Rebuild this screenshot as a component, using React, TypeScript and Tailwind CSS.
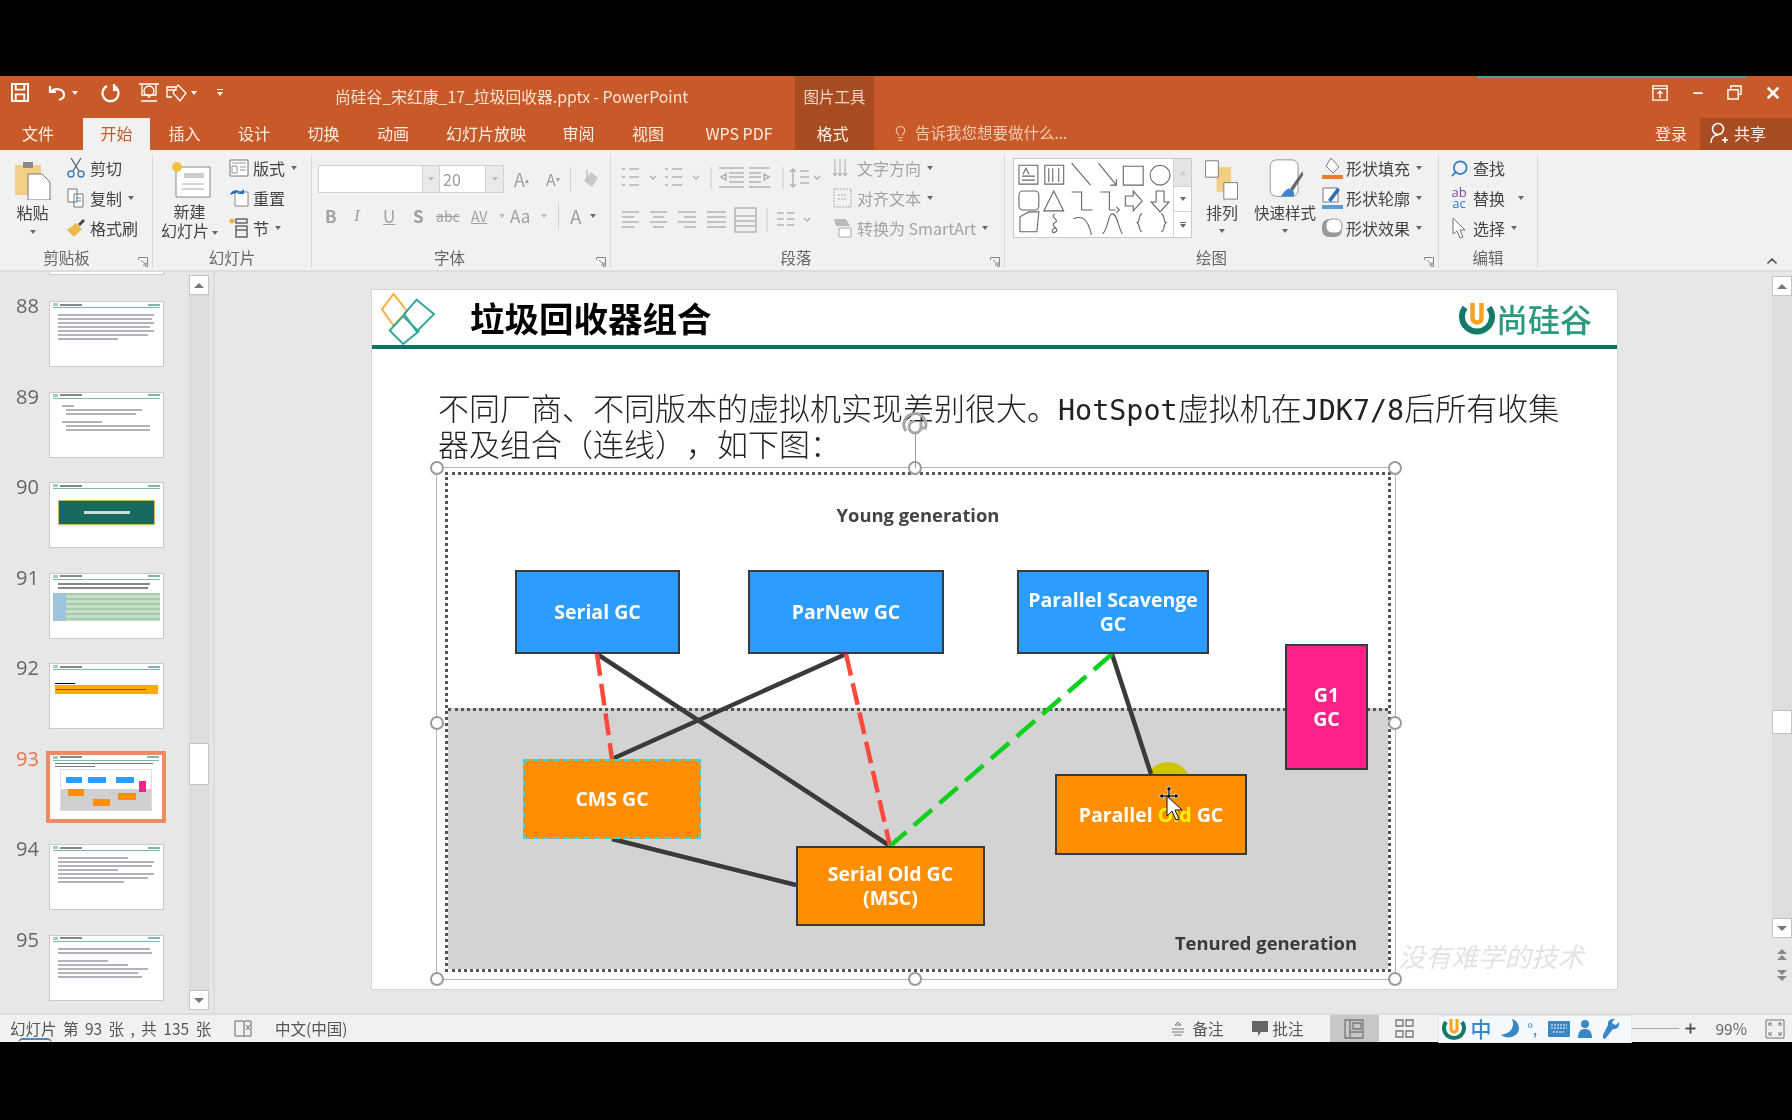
import { ChevronUp, Lightbulb, Minus, Plus, Search, X } from "lucide-react";

const cjk = "font-['Microsoft_YaHei','Noto_Sans_CJK_SC','Noto_Sans',sans-serif]";

const tabs = [
  { label: "文件", w: "w-[83px] pr-[7px]" },
  { label: "开始", w: "w-[67px]", active: true },
  { label: "插入", w: "w-[69px]" },
  { label: "设计", w: "w-[70px]" },
  { label: "切换", w: "w-[69px]" },
  { label: "动画", w: "w-[70px]" },
  { label: "幻灯片放映", w: "w-[116px]" },
  { label: "审阅", w: "w-[69px]" },
  { label: "视图", w: "w-[70px]" },
  { label: "WPS PDF", w: "w-[112px]" },
];

const Caret = ({ className = "" }: { className?: string }) => (
  <span className={`inline-block w-0 h-0 border-x-[3px] border-x-transparent border-t-[4px] border-t-[#666] ${className}`} />
);

function GroupLabel({ text, launcher, className = "" }: { text: string; launcher?: boolean; className?: string }) {
  return (
    <div className={`relative h-[20px] flex items-center justify-center text-[15.5px] text-[#666] ${className}`}>
      {text}
      {launcher && (
        <svg className="absolute right-[4px] bottom-[1px]" width="10" height="10" viewBox="0 0 10 10" fill="none" stroke="#888">
          <path d="M.5 3V.5H9.500V9.500H7M3 3l5 5M8 5v3H5" />
        </svg>
      )}
    </div>
  );
}

function SmallBtn({ icon, text, caret, muted }: { icon: React.ReactNode; text: string; caret?: boolean; muted?: boolean }) {
  return (
    <div className={`h-[30px] flex items-center gap-[3px] text-[16px] whitespace-nowrap ${muted ? "text-[#a3a3a3]" : "text-[#444]"}`}>
      <span className="w-[22px] h-[22px] flex items-center justify-center shrink-0">{icon}</span>
      {text}
      {caret && <Caret className="ml-[3px]" />}
    </div>
  );
}

function Thumb({ num, selected, children }: { num: number; selected?: boolean; children: React.ReactNode }) {
  return (
    <div className="h-[90.5px] flex">
      <div className={`w-[46px] pl-[16px] -mt-[6px] text-[20px] leading-[22px] ${selected ? "text-[#e8744a]" : "text-[#666]"} font-['Open_Sans',sans-serif]`}>{num}</div>
      <div className={selected ? "w-[120px] h-[72px] -mt-[3px] border-[4px] border-[#ef8a62] bg-white" : "ml-[3px] w-[115px] h-[66px] border border-[#c9cac9] bg-white"}>
        <div className="h-[6px] mx-[3px] border-b border-[#7fb8ae] flex items-center gap-[2px]">
          <span className="w-[5px] h-[3px] bg-[#9fd0c8]" />
          <span className="w-[22px] h-[2px] bg-[#888]" />
          <span className="ml-auto w-[12px] h-[2px] bg-[#7fb8ae]" />
        </div>
        {children}
      </div>
    </div>
  );
}

const TextBars = ({ bars }: { bars: string[] }) => (
  <div className="pt-[6px] px-[8px] flex flex-col gap-[2px]">
    {bars.map((b, i) => (
      <div key={i} className={`h-[2px] bg-[#b0b3bd] ${b}`} />
    ))}
  </div>
);

function Shape({ text, className, children }: { text?: string; className: string; children?: React.ReactNode }) {
  return (
    <div className={`absolute flex items-center justify-center text-center border-2 border-[#3a3a3a] text-white font-bold text-[19.5px] leading-[24px] font-['Open_Sans',sans-serif] ${className}`}>
      {children ?? text}
    </div>
  );
}

const handles = [
  "left-0 top-0", "left-[478px] top-0", "left-[958px] top-0",
  "left-0 top-[255px]", "left-[958px] top-[255px]",
  "left-0 top-[511px]", "left-[478px] top-[511px]", "left-[958px] top-[511px]",
];

const ULogo = ({ size }: { size: number }) => (
  <svg width={size} height={size} viewBox="0 0 24 24" fill="none">
    <path d="M4 5a10 10 0 1 0 16 0" stroke="#137a68" strokeWidth="4" />
    <path d="M9 2v10a3 3 0 0 0 6 0V2" stroke="#f3a51c" strokeWidth="3" />
  </svg>
);

export default function App() {
  return (
    <div className={`w-[1792px] h-[1120px] bg-black overflow-hidden blur-[0.4px] ${cjk}`}>
      <div className="h-[76px]" />

      {/* title bar */}
      <div className="relative h-[42px] bg-[#c75a28] flex items-center text-white">
        <div className="absolute right-[46px] top-0 w-[269px] h-[2px] bg-[#3fa89a]" />
        <div className="w-[335px] -mt-[9px] flex items-center pl-[11px] text-white">
          <svg width="18" height="19" viewBox="0 0 19 20" fill="none" stroke="white" strokeWidth="2">
            <path d="M1 1h17v18H1zM5 1v6h9V1M5 19v-7h9v7" />
          </svg>
          <svg className="ml-[19px]" width="20" height="18" viewBox="0 0 20 18" fill="none" stroke="white" strokeWidth="2.200">
            <path d="M2 2v6h6M3 8c3-4 12-4 13 2 .5 3-2 5-5 6" />
          </svg>
          <Caret className="ml-[4px] !border-t-white" />
          <svg className="ml-[23px]" width="19" height="20" viewBox="0 0 19 20" fill="none" stroke="white" strokeWidth="2.200">
            <path d="M6 3a8 8 0 1 0 7 0M13 1v6h5" />
          </svg>
          <svg className="ml-[17px]" width="24" height="24" viewBox="0 0 24 24" fill="none" stroke="white" strokeWidth="1.300">
            <path d="M2 3h20M5 3v11h14V3M4 20h16M12 14v3" />
            <circle cx="12" cy="10" r="5" />
          </svg>
          <svg className="ml-[4px]" width="24" height="22" viewBox="0 0 24 22" fill="none" stroke="white" strokeWidth="1.300">
            <path d="M2 5h9v3h-9zM13 3l8 8-6 8-7-8zM2 5v10h5" />
          </svg>
          <Caret className="ml-[2px] !border-t-white" />
          <span className="ml-[20px] flex flex-col items-center gap-[2px]">
            <span className="w-[6px] h-px bg-white" />
            <Caret className="!border-t-white" />
          </span>
        </div>
        <div className="w-[460px] -mt-[1px] text-[15.8px] text-[#f6e3d8] whitespace-nowrap">尚硅谷_宋红康_17_垃圾回收器.pptx - PowerPoint</div>
        <div className="w-[79px] h-full bg-[#a84d22] flex items-center justify-center text-[15.500px] text-[#efd3c3]">图片工具</div>
        <div className="ml-auto -mt-[9px] flex items-center pr-[10px]">
          <svg width="16" height="16" viewBox="0 0 18 18" fill="none" stroke="white" strokeWidth="1.500">
            <path d="M1 1h16v16H1zM1 4h16M9 15V7M6 10l3-3 3 3" />
          </svg>
          <Minus className="ml-[23px]" size={14} strokeWidth={3} />
          <svg className="ml-[22px]" width="15" height="15" viewBox="0 0 16 16" fill="none" stroke="white" strokeWidth="1.500">
            <path d="M4 4V1h11v9h-3M1 5h11v10H1z" />
          </svg>
          <X className="ml-[22px]" size={18} strokeWidth={3.5} />
        </div>
      </div>

      {/* tabs */}
      <div className="h-[32px] bg-[#c75a28] flex items-stretch text-[16px] text-[#fbeee6]">
        {tabs.map((t) => (
          <div key={t.label} className={`${t.w} flex items-center justify-center pb-[2px] ${t.active ? "bg-[#f1f1f0] text-[#c75a28]" : ""}`}>
            {t.label}
          </div>
        ))}
        <div className="w-[79px] bg-[#a84d22] flex items-center justify-center pb-[2px] pr-[4px]">格式</div>
        <div className="ml-[18px] pb-[2px] flex items-center gap-[6px] text-[#f0c9b3] text-[15.5px]">
          <Lightbulb size={17} strokeWidth={1.500} />
          告诉我您想要做什么...
        </div>
        <div className="ml-auto flex items-center">
          <span className="mr-[13px] pb-[2px]">登录</span>
          <div className="w-[92px] h-full bg-[#a84d22] flex items-center pl-[9px] gap-[5px] pb-[2px]">
            <svg width="20" height="22" viewBox="0 0 20 22" fill="none" stroke="white" strokeWidth="1.600">
              <circle cx="9" cy="7" r="5.500" />
              <path d="M2 21c0-5 3-8 7-8M13 18h6M16 15v6" />
            </svg>
            共享
          </div>
        </div>
      </div>

      {/* ribbon */}
      <div className="relative h-[122px] bg-[#f0f1f0] flex border-b-2 border-[#dcdddc]">
        {/* clipboard */}
        <div className="w-[153px] border-r border-[#d8d9d8] flex flex-col mt-[4px] mb-[2px]">
          <div className="flex-1 flex">
            <div className="w-[65px] flex flex-col items-center pt-[4px]">
              <svg width="38" height="42" viewBox="0 0 38 42">
                <path d="M1 7h26v30H1z" fill="#f2cf85" />
                <path d="M9 4h10v6H9z" fill="#8a8a8a" />
                <path d="M14 16h14l8 8v18H14z" fill="#fff" stroke="#777" />
              </svg>
              <span className="text-[16px] leading-[20px] mt-[2px] text-[#444]">粘贴</span>
              <Caret className="mt-[8px]" />
            </div>
            <div className="-mt-[1px]">
              <SmallBtn text="剪切" icon={<svg width="20" height="22" viewBox="0 0 20 22" fill="none" stroke="#5b6b7b" strokeWidth="1.400"><path d="M5 1l8 13M15 1L7 14" /><circle cx="5" cy="17" r="3" stroke="#3d7cc0" /><circle cx="15" cy="17" r="3" stroke="#3d7cc0" /></svg>} />
              <SmallBtn text="复制" caret icon={<svg width="18" height="20" viewBox="0 0 18 20" fill="#fff" stroke="#777"><path d="M1 1h9v13H1zM7 6h9v13H7z" /><path d="M9 10h5M9 13h5" stroke="#4a8ac8" /></svg>} />
              <SmallBtn text="格式刷" icon={<svg width="20" height="20" viewBox="0 0 20 20"><path d="M1 12l9-7 6 6-8 8z" fill="#eeb84f" /><path d="M12 6l5-5 2 2-5 5z" fill="#444" /></svg>} />
            </div>
          </div>
          <GroupLabel text="剪贴板" launcher className="pr-[19px]" />
        </div>

        {/* slides */}
        <div className="w-[159px] border-r border-[#d8d9d8] flex flex-col mt-[4px] mb-[2px]">
          <div className="flex-1 flex">
            <div className="w-[75px] flex flex-col items-center pt-[4px] pr-[2px]">
              <svg width="44" height="42" viewBox="0 0 44 42">
                <path d="M8 9h34v30H8z" fill="#fff" stroke="#888" />
                <path d="M16 15h20v5H16z" fill="#ccc" />
                <path d="M14 26h22M14 31h22" stroke="#aaa" />
                <circle cx="9" cy="9" r="5" fill="#f2c23f" />
              </svg>
              <span className="text-[16px] leading-[19px] mt-[2px] text-[#444]">新建</span>
              <span className="text-[16px] leading-[19px] text-[#444] whitespace-nowrap">幻灯片<Caret className="ml-[3px] mb-[2px]" /></span>
            </div>
            <div className="-mt-[1px]">
              <SmallBtn text="版式" caret icon={<svg width="20" height="20" viewBox="0 0 20 20" fill="#fff" stroke="#777"><path d="M1 2h18v16H1z" /><path d="M3 5h14M3 8h5v7H3zM11 9h6M11 12h6" stroke="#999" /></svg>} />
              <SmallBtn text="重置" icon={<svg width="20" height="20" viewBox="0 0 20 20" fill="none"><path d="M6 4h13v14H6z" fill="#fff" stroke="#888" /><path d="M1 7c1-5 7-6 10-3l-3 2h7V1l-2 2" fill="#2c6fb3" /></svg>} />
              <SmallBtn text="节" caret icon={<svg width="20" height="22" viewBox="0 0 20 22" fill="none"><path d="M7 2h11v4H7zM7 9h11v11H7zM7 13h11" stroke="#666" strokeWidth="1.500" /><circle cx="3" cy="4" r="2.500" fill="#f2b13f" /></svg>} />
            </div>
          </div>
          <GroupLabel text="幻灯片" />
        </div>

        {/* font */}
        <div className="w-[299px] border-r border-[#d8d9d8] flex flex-col mt-[4px] mb-[2px] text-[#a0a0a0]">
          <div className="flex-1 pl-[6px] pt-[11px]">
            <div className="flex items-center">
              <div className="w-[105px] h-[28px] bg-white border border-[#d2d3d2]" />
              <div className="w-[16px] h-[28px] bg-[#e8e9e8] border-y border-[#d2d3d2] flex items-center justify-center"><Caret className="!border-t-[#bbb]" /></div>
              <div className="w-[47px] h-[28px] bg-white border border-[#d2d3d2] pl-[3px] leading-[26px] text-[16px] text-[#999]">20</div>
              <div className="w-[18px] h-[28px] bg-[#e8e9e8] border-y border-r border-[#d2d3d2] flex items-center justify-center"><Caret className="!border-t-[#bbb]" /></div>
              <span className="ml-[10px] w-[24px] text-[18px]">A<sup className="text-[8px]">▴</sup></span>
              <span className="ml-[8px] w-[22px] text-[16px]">A<sup className="text-[8px]">▾</sup></span>
              <span className="ml-[2px] h-[24px] border-l border-[#d0d0d0]" />
              <svg className="ml-[10px]" width="20" height="20" viewBox="0 0 20 20"><path d="M3 12L10 3l7 6-6 9z" fill="#c9c9c9" /><path d="M6 1v10" stroke="#aaa" /></svg>
            </div>
            <div className="mt-[10px] flex items-center text-[17px] leading-[24px]">
              <span className="ml-[7px] w-[29px] font-bold">B</span>
              <span className="w-[29px] italic font-['Liberation_Serif',serif]">I</span>
              <span className="w-[30px] underline">U</span>
              <span className="w-[23px] font-bold">S</span>
              <span className="w-[35px] text-[14px] line-through">abc</span>
              <span className="w-[28px] text-[14px] underline">AV</span>
              <Caret className="mr-[5px] !border-t-[#bbb]" />
              <span className="w-[31px]">Aa</span>
              <Caret className="!border-t-[#bbb]" />
              <span className="ml-[11px] h-[26px] border-l border-[#d0d0d0]" />
              <span className="ml-[11px] w-[20px] text-[19px]">A</span>
              <Caret className="!border-t-[#666]" />
            </div>
          </div>
          <GroupLabel text="字体" launcher className="pr-[23px]" />
        </div>

        {/* paragraph */}
        <div className="w-[394px] border-r border-[#d8d9d8] flex flex-col mt-[4px] mb-[2px]">
          <div className="flex-1 flex">
            <div className="w-[221px] pl-[10px] pt-[12px]">
              <svg width="205" height="68" viewBox="0 0 205 68" fill="none" stroke="#b4b4b4" strokeWidth="1.500">
                <path d="M1 3h3M1 11h3M1 19h3M8 3h10M8 11h10M8 19h10M44 3h3M44 11h3M44 19h3M51 3h10M51 11h10M51 19h10" />
                <path d="M29 10l3 3 3-3M72 10l3 3 3-3" />
                <path d="M90 1v22" stroke="#d6d6d6" />
                <path d="M98 2h25M98 21h25M108 7h15M108 11h15M108 16h15M100 11l5-3v6zM128 2h21M128 21h21M128 7h12M128 11h12M128 16h12M148 11l-5-3v6z" />
                <path d="M162 1v22" stroke="#d6d6d6" />
                <path d="M172 3v18M169 6l3-3 3 3M169 18l3 3 3-3M179 5h9M179 11h9M179 17h9M193 10l3 3 3-3" />
                <path d="M1 46h17M1 51h12M1 56h17M1 61h12M29 46h17M32 51h11M29 56h17M32 61h11M57 46h18M63 51h12M57 56h18M63 61h12M86 46h19M86 51h19M86 56h19M86 61h19" />
                <path d="M114 42h21v24h-21zM114 50h21M114 55h21M114 60h21" />
                <path d="M146 42v24" stroke="#d6d6d6" />
                <path d="M156 47h7M166 47h7M156 53h7M166 53h7M156 59h7M166 59h7M183 52l3 3 3-3" />
              </svg>
            </div>
            <div className="text-[#a6a6a6] -mt-[1px]">
              <SmallBtn muted text="文字方向" caret icon={<svg width="20" height="22" viewBox="0 0 20 22" fill="none" stroke="#aaa"><path d="M2 2v16M7 2v16M12 2v16M0 16l2 3 2-3M5 16l2 3 2-3M10 16l2 3 2-3" /></svg>} />
              <SmallBtn muted text="对齐文本" caret icon={<svg width="20" height="22" viewBox="0 0 20 22" fill="none" stroke="#aaa" strokeDasharray="2 1"><path d="M1 2h17v18H1zM5 8h9M5 12h9" /></svg>} />
              <SmallBtn muted text="转换为 SmartArt" caret icon={<svg width="20" height="22" viewBox="0 0 20 22"><path d="M1 2h12l4 7H3z" fill="#b9b9b9" /><path d="M6 11h12v9H6z" fill="#fff" stroke="#aaa" /></svg>} />
            </div>
          </div>
          <GroupLabel text="段落" launcher className="pr-[23px]" />
        </div>

        {/* drawing */}
        <div className="w-[434px] border-r border-[#d8d9d8] flex flex-col mt-[4px] mb-[2px]">
          <div className="flex-1 flex">
            <div className="ml-[8px] mt-[4px] h-[80px] w-[179px] flex border border-[#c9cac9] bg-white">
              <svg className="flex-1" width="160" height="78" viewBox="0 0 160 78" fill="none" stroke="#666" strokeWidth="1.100">
                <path d="M5 6h19v19H5zM8 17h13M8 21h13M9 15l3-6 3 6" />
                <path d="M31 6h19v19H31zM35 9v14M39 9v14M45 9v14" />
                <path d="M58 4l19 22M85 4l18 22M103 20v6h-6" />
                <path d="M110 7h20v19h-20z" />
                <circle cx="147" cy="16" r="10" />
                <rect x="5" y="32" width="20" height="19" rx="4" />
                <path d="M40 32l10 20H30zM58 33h10v18h11M87 33h9v18h6M103 48l3 3-3 3M112 37h8v-5l9 10-9 10v-5h-8zM143 32h8v11h5l-9 10-9-10h5z" />
                <path d="M6 73V58l9-5h10l-2 20zM41 55c-6 3 6 6 0 9s6 6 1 9-4-3 0-4M60 60c9-4 14 0 18 16M89 75c6-4 5-20 10-20s6 14 10 20M129 55c-4 0-2 8-5 9 3 1 1 9 5 9M148 55c4 0 2 8 5 9-3 1-1 9-5 9" />
              </svg>
              <div className="w-[18px] flex flex-col border-l border-[#d2d3d2]">
                <div className="h-[27px] bg-[#e3e4e3] flex items-center justify-center"><Caret className="rotate-180 !border-t-[#ccc]" /></div>
                <div className="h-[26px] border-y border-[#d2d3d2] flex items-center justify-center"><Caret /></div>
                <div className="flex-1 flex flex-col items-center justify-center gap-[1px]"><span className="w-[6px] h-px bg-[#666]" /><Caret /></div>
              </div>
            </div>
            <div className="ml-[8px] w-[44px] flex flex-col items-center pt-[4px]">
              <svg width="36" height="42" viewBox="0 0 38 46">
                <path d="M13 10h16v27H13z" fill="#f2cf85" />
                <path d="M1 3h14v18H1zM21 27h15v18H21z" fill="#fff" stroke="#777" />
              </svg>
              <span className="text-[16px] leading-[20px] mt-[2px] text-[#444]">排列</span>
              <Caret className="mt-[7px]" />
            </div>
            <div className="ml-[9px] w-[64px] flex flex-col items-center pt-[5px]">
              <svg width="40" height="40" viewBox="0 0 44 46">
                <rect x="5" y="1" width="32" height="42" rx="7" fill="#fff" stroke="#888" />
                <path d="M42 14L28 34l3 3 12-19z" fill="#666" />
                <path d="M26 34c-4 2-6 5-9 9h15c2-3 0-8-6-9z" fill="#3d86cf" />
              </svg>
              <span className="text-[15.5px] leading-[20px] mt-[3px] text-[#444] whitespace-nowrap">快速样式</span>
              <Caret className="mt-[7px]" />
            </div>
            <div className="ml-[4px] -mt-[1px]">
              <SmallBtn text="形状填充" caret icon={<svg width="22" height="24" viewBox="0 0 22 24"><path d="M10 2l8 9-6 6-7-7z" fill="#fff" stroke="#777" /><path d="M1 19h21v4H1z" fill="#ed7d31" /></svg>} />
              <SmallBtn text="形状轮廓" caret icon={<svg width="22" height="24" viewBox="0 0 22 24"><path d="M2 2h15v14H2z" fill="#fff" stroke="#777" /><path d="M7 14l9-12 3 2-9 12z" fill="#2c6fb3" /><path d="M1 19h21v4H1z" fill="#5b9bd5" /></svg>} />
              <SmallBtn text="形状效果" caret icon={<svg width="22" height="22" viewBox="0 0 22 22"><rect x="1" y="2" width="20" height="18" rx="7" fill="#999" /><rect x="5" y="2" width="16" height="14" rx="6" fill="#fff" stroke="#999" /></svg>} />
            </div>
          </div>
          <GroupLabel text="绘图" launcher className="pr-[20px]" />
        </div>

        {/* editing */}
        <div className="w-[99px] border-r border-[#d8d9d8] flex flex-col mt-[4px] mb-[2px]">
          <div className="flex-1 pl-[9px] -mt-[1px]">
            <SmallBtn text="查找" icon={<Search size={19} className="text-[#2f7dc4] -scale-x-100" strokeWidth={2.200} />} />
            <div className="h-[30px] flex items-center gap-[3px] text-[16px] text-[#444]">
              <span className="w-[22px] text-[13px] leading-[11px] text-center font-['Open_Sans',sans-serif]"><span className="text-[#7d4aa8]">ab</span><br /><span className="text-[#2f7dc4]">ac</span></span>
              替换<Caret className="ml-[10px]" />
            </div>
            <SmallBtn text="选择" caret icon={<svg width="14" height="22" viewBox="0 0 14 22" fill="#fff" stroke="#777"><path d="M1 1v16l4-3 3 7 3-1-3-7h5z" /></svg>} />
          </div>
          <GroupLabel text="编辑" />
        </div>

        <ChevronUp className="absolute right-[12px] bottom-[1px] text-[#555]" size={16} strokeWidth={2.500} />
      </div>

      {/* main area */}
      <div className="h-[741px] bg-[#e6e7e6] flex">
        {/* thumbnail pane */}
        <div className="w-[215px] flex border-r-2 border-[#dcdddc]">
          <div className="w-[189px] pt-[29px] overflow-hidden">
            <div className="relative h-0"><div className="absolute left-[49px] -top-[35px] w-[115px] h-[9px] bg-white border border-[#c9cac9]" /></div>
            <Thumb num={88}><TextBars bars={["w-[96px]", "w-[94px]", "w-[96px]", "w-[92px]", "w-[96px]", "w-[90px]", "w-[60px]"]} /></Thumb>
            <Thumb num={89}><TextBars bars={["ml-[4px] w-[12px]", "ml-[8px] w-[76px]", "ml-[8px] w-[70px]", "w-[0px]", "ml-[4px] w-[40px]", "ml-[8px] w-[84px]", "ml-[8px] w-[84px]"]} /></Thumb>
            <Thumb num={90}>
              <div className="mx-[8px] mt-[11px] h-[25px] bg-[#17695e] border border-[#d9b65c] flex items-center justify-center shadow-sm">
                <span className="w-[46px] h-[3px] bg-[#c9dcd8]" />
              </div>
            </Thumb>
            <Thumb num={91}>
              <div className="px-[8px] pt-[3px] flex flex-col gap-[2px]">
                <div className="h-[2px] w-[92px] bg-[#888]" />
                <div className="h-[2px] w-[90px] bg-[#888]" />
              </div>
              <div className="mx-[3px] mt-[4px] h-[28px] bg-[#b3d2b7] flex">
                <div className="w-[13px] h-full bg-[#9dc3dd]" />
                <div className="flex-1 bg-[repeating-linear-gradient(180deg,#a7cbaa_0,#a7cbaa_2px,#c6dfc8_2px,#c6dfc8_5px)]" />
              </div>
            </Thumb>
            <Thumb num={92}>
              <div className="mx-[5px] mt-[13px] h-[1px] w-[20px] bg-black" />
              <div className="mx-[5px] mt-[1px] h-[9px] bg-[#ffab00] flex items-center px-[1px]">
                <span className="h-[1px] w-[90px] bg-[#7a5a00]" />
              </div>
            </Thumb>
            <Thumb num={93} selected>
              <div className="px-[5px] pt-[2px]">
                <div className="h-[1px] w-[98px] bg-[#777]" />
                <div className="h-[1px] mt-[2px] w-[40px] bg-[#777]" />
              </div>
              <div className="relative mx-[10px] mt-[2px] h-[42px] border border-[#ddd]">
                <div className="absolute left-0 right-0 bottom-0 h-[21px] bg-[#cfd0cf]" />
                <div className="absolute left-[5px] top-[7px] w-[16px] h-[6px] bg-[#2d9cff]" />
                <div className="absolute left-[27px] top-[7px] w-[18px] h-[6px] bg-[#2d9cff]" />
                <div className="absolute left-[55px] top-[7px] w-[18px] h-[6px] bg-[#2d9cff]" />
                <div className="absolute left-[78px] top-[11px] w-[7px] h-[11px] bg-[#ff2288]" />
                <div className="absolute left-[7px] top-[19px] w-[16px] h-[7px] bg-[#ff8f00]" />
                <div className="absolute left-[32px] top-[29px] w-[17px] h-[7px] bg-[#ff8f00]" />
                <div className="absolute left-[57px] top-[23px] w-[18px] h-[7px] bg-[#ff8f00]" />
              </div>
            </Thumb>
            <Thumb num={94}><TextBars bars={["w-[70px]", "w-[96px]", "w-[94px]", "w-[60px]", "w-[96px]", "w-[90px]", "w-[66px]"]} /></Thumb>
            <Thumb num={95}><TextBars bars={["w-[92px]", "w-[94px]", "w-[0px]", "w-[50px]", "w-[70px]", "w-[90px]", "w-[80px]", "w-[84px]"]} /></Thumb>
          </div>
          <div className="w-[20px] my-[3px] bg-[#dcdedc] flex flex-col">
            <div className="h-[20px] bg-white border border-[#c2c3c2] flex items-center justify-center"><Caret className="rotate-180 !border-t-[#777] !border-x-[5px] !border-t-[5px]" /></div>
            <div className="h-[448px]" />
            <div className="h-[42px] bg-white border border-[#c2c3c2]" />
            <div className="flex-1" />
            <div className="h-[20px] bg-white border border-[#c2c3c2] flex items-center justify-center"><Caret className="!border-t-[#777] !border-x-[5px] !border-t-[5px]" /></div>
          </div>
        </div>

        {/* editor */}
        <div className="flex-1 pl-[156px] pt-[17px]">
          <div className="relative w-[1247px] h-[701px] bg-white border border-[#d4d5d4]">
            <div className="relative h-[59px] flex items-center border-b-[4px] border-[#0f7465]">
              <svg className="ml-[7px] shrink-0" width="58" height="54" viewBox="0 0 58 56" fill="none" strokeWidth="2">
                <path d="M14 3L28 21 14 36 2 19z" stroke="#f3b23c" />
                <path d="M38 9L56 24 38 42 25 24z" stroke="#2fa79a" />
                <path d="M24 26L40 42 24 55 10 41z" stroke="#2fa79a" />
              </svg>
              <h1 className="ml-[33px] text-[34.5px] font-bold text-black leading-none">垃圾回收器组合</h1>
              <div className="ml-auto mr-[25px] flex items-center gap-[1px]">
                <ULogo size={36} />
                <span className="text-[32px] font-medium leading-none text-[#2a9a80]">尚硅谷</span>
              </div>
            </div>

            <div className="mt-[40px] ml-[66px] text-[31px] leading-[36px] text-[#222] font-light whitespace-nowrap [text-spacing-trim:space-all]">
              <p className="h-[36px]">
                不同厂商、不同版本的虚拟机实现差别很大。<span className="font-['DejaVu_Sans_Mono',monospace] text-[28.4px] leading-none font-normal">HotSpot</span>虚拟机在<span className="font-['DejaVu_Sans_Mono',monospace] text-[28.4px] leading-none font-normal">JDK7/8</span>后所有收集
              </p>
              <p className="h-[36px]">器及组合（连线），如下图：</p>
            </div>

            {/* selected picture */}
            <div className="relative mt-[6px] ml-[64px] w-[960px] h-[513px] border border-[#b5b6b5]">
              <div className="absolute left-[8px] top-[4px] w-[946px] h-[500px] border-[3px] border-dotted border-[#555]">
                <div className="absolute left-0 right-0 bottom-0 h-[261px] bg-[#d2d3d2] border-t-[3px] border-dotted border-[#555]" />
                <div className="absolute left-0 w-full top-[26px] text-center text-[18.4px] font-bold text-[#444] font-['Open_Sans',sans-serif]">Young generation</div>
                <div className="absolute right-[31px] bottom-[12px] text-[18.4px] font-bold text-[#3a3a3a] font-['Open_Sans',sans-serif]">Tenured generation</div>
              </div>
              <div className="absolute left-[708px] top-[294px] w-[46px] h-[46px] rounded-full bg-[#cfc400]" />

              <svg className="absolute left-0 top-0" width="958" height="511" viewBox="437 469 958 511" fill="none" strokeWidth="4.500">
                <path d="M597 655L890 847M846 655L612 760M1112 655L1151 775M612 840L796 886" stroke="#3a3a3a" />
                <path d="M597 655L612 760M846 655L890 847" stroke="#ff4a3d" strokeDasharray="22 8" />
                <path d="M1112 655L890 847" stroke="#0fd01f" strokeDasharray="24 10" />
              </svg>

              <Shape className="left-[78px] top-[102px] w-[165px] h-[84px] bg-[#2d9cff]" text="Serial GC" />
              <Shape className="left-[311px] top-[102px] w-[196px] h-[84px] bg-[#2d9cff]" text="ParNew GC" />
              <Shape className="left-[580px] top-[102px] w-[192px] h-[84px] bg-[#2d9cff]"><span>Parallel Scavenge<br />GC</span></Shape>
              <Shape className="left-[848px] top-[176px] w-[83px] h-[126px] bg-[#ff2288]"><span>G1<br />GC</span></Shape>
              <Shape className="left-[86px] top-[291px] w-[178px] h-[80px] bg-[#ff8f00] !border-dashed !border-[#3fd3e0]" text="CMS GC" />
              <Shape className="left-[359px] top-[378px] w-[189px] h-[80px] bg-[#ff8f00]"><span>Serial Old GC<br />(MSC)</span></Shape>
              <Shape className="left-[618px] top-[306px] w-[192px] h-[81px] bg-[#ff8f00]"><span>Parallel <span className="text-[#fff000]">Old</span> GC</span></Shape>

              {/* move cursor */}
              <svg className="absolute left-[719px] top-[317px]" width="28" height="40" viewBox="0 0 28 40">
                <path d="M13 1l3 4h-2v5h5V8l4 3-4 3v-2h-5v4h-2v-4H7v2l-4-3 4-3v2h5V5h-2z" fill="#111" stroke="#fff" strokeWidth=".6" />
                <path d="M11 11v20l5-5 4 9 3-1-4-9h7z" fill="#fff" stroke="#111" />
              </svg>

              {handles.map((h) => (
                <div key={h} className={`absolute ${h} -ml-[7px] -mt-[7px] w-[14px] h-[14px] rounded-full bg-white border-2 border-[#9a9b9a]`} />
              ))}

              {/* rotate handle */}
              <div className="absolute left-[478px] -top-[34px] h-[34px] border-l border-[#9a9b9a]" />
              <svg className="absolute left-[463px] -top-[57px]" width="30" height="30" viewBox="0 0 30 30" fill="none" stroke="#a5a6a5" strokeWidth="3">
                <path d="M6 20A11 11 0 1 1 25 18M15 10a6 6 0 1 0 6 6M21 11v6h6" />
              </svg>
            </div>

            <div className="absolute right-[33px] bottom-[13px] text-[26.5px] italic text-[#e2e3e2] whitespace-nowrap">没有难学的技术</div>
          </div>
        </div>

        {/* right scrollbar */}
        <div className="w-[21px] pt-[4px] pb-[10px] flex flex-col items-center">
          <div className="w-[20px] h-[20px] bg-white border border-[#c2c3c2] flex items-center justify-center"><Caret className="rotate-180 !border-t-[#777] !border-x-[5px] !border-t-[5px]" /></div>
          <div className="w-[20px] h-[414px] bg-[#dcdedc]" />
          <div className="w-[20px] h-[24px] bg-white border border-[#c2c3c2]" />
          <div className="w-[20px] h-[184px] bg-[#dcdedc]" />
          <div className="w-[20px] h-[20px] bg-white border border-[#c2c3c2] flex items-center justify-center"><Caret className="!border-t-[#777] !border-x-[5px] !border-t-[5px]" /></div>
          <div className="mt-[11px] flex flex-col items-center gap-[1px]">
            <Caret className="rotate-180 !border-t-[#888] !border-x-[5px] !border-t-[5px]" />
            <Caret className="rotate-180 !border-t-[#888] !border-x-[5px] !border-t-[5px]" />
          </div>
          <div className="mt-[10px] flex flex-col items-center gap-[1px]">
            <Caret className="!border-t-[#888] !border-x-[5px] !border-t-[5px]" />
            <Caret className="!border-t-[#888] !border-x-[5px] !border-t-[5px]" />
          </div>
        </div>
      </div>

      {/* status bar */}
      <div className="relative h-[29px] bg-[#f0f1f0] flex items-center text-[15.5px] text-[#555] border-t-2 border-[#dcdddc]">
        <span className="ml-[10px] w-[224px] whitespace-nowrap [word-spacing:3px]">幻灯片 第 93 张 , 共 135 张</span>
        <svg width="20" height="20" viewBox="0 0 20 20" fill="none" stroke="#666">
          <path d="M1 2h8c1 0 1 1 1 1v15s0-1-1-1H1zM10 3s0-1 1-1h6v15h-6M12 6l4 5M16 6l-4 5" />
        </svg>
        <span className="ml-[21px]">中文(中国)</span>
        <div className="absolute left-[18px] -bottom-[1px] w-[34px] h-[5px] rounded-t-full border-t-2 border-[#4f86b8]" />
        <div className="ml-auto flex items-center h-full">
          <svg width="14" height="16" viewBox="0 0 14 16" fill="none" stroke="#777"><path d="M7 1L4 4h6zM1 8h12M1 11h12M3 14h8" /></svg>
          <span className="ml-[7px] mr-[28px]">备注</span>
          <svg width="16" height="17" viewBox="0 0 16 17"><path d="M0 1h16v11H9l-3 4v-4H0z" fill="#666" /></svg>
          <span className="ml-[5px] mr-[26px]">批注</span>
          <div className="w-[49px] h-full bg-[#c6c7c6] flex items-center justify-center">
            <svg width="20" height="20" viewBox="0 0 20 20" fill="none" stroke="#777" strokeWidth="1.300"><path d="M1 1h18v18H1zM6 1v18M6 13h13M9 4h8v6H9z" /></svg>
          </div>
          <svg className="ml-[16px]" width="19" height="19" viewBox="0 0 19 19" fill="none" stroke="#777" strokeWidth="1.300"><path d="M1 1h7v6H1zM11 1h7v6h-7zM1 12h7v6H1zM11 12h7v6h-7z" /></svg>
          <div className="ml-[24px] w-[194px] h-[28px] bg-[#f5f9fc] flex items-center gap-[8px] pl-[3px] border border-[#e3e8ec] text-[#3a87c8]">
            <ULogo size={24} />
            <span className="text-[21px] leading-none font-medium -ml-[3px]">中</span>
            <svg width="20" height="22" viewBox="0 0 20 22"><path d="M12 1c3 7 0 14-11 16 6 5 18 2 18-7 0-4-3-8-7-9z" fill="#3a87c8" /></svg>
            <span className="text-[15px] leading-none w-[12px]">°,</span>
            <svg width="22" height="20" viewBox="0 0 22 20"><rect x="0" y="2" width="22" height="16" rx="1" fill="#3a87c8" /><path d="M3 6h16M3 9h16M5 13h12" stroke="#fff" strokeDasharray="2 1" /></svg>
            <svg width="14" height="20" viewBox="0 0 14 20" fill="#3a87c8"><circle cx="7" cy="5" r="4" /><path d="M0 19c0-7 3-9 7-9s7 2 7 9z" /></svg>
            <svg className="ml-[2px]" width="18" height="20" viewBox="0 0 18 20" fill="#3a87c8"><path d="M1 19l2 1 8-10c3 1 7-2 6-7l-3 3-3-1-1-2 3-3c-5-1-8 3-7 6L1 16z" /></svg>
          </div>
          <div className="w-[47px] h-px bg-[#aaa]" />
          <Plus className="ml-[4px] text-[#555]" size={15} strokeWidth={3} />
          <span className="ml-[18px] text-[#666]">99%</span>
          <svg className="ml-[18px] mr-[7px]" width="20" height="20" viewBox="0 0 20 20" fill="none" stroke="#777"><path d="M1 1h18v18H1zM4 4l3 3M16 4l-3 3M4 16l3-3M16 16l-3-3M4 7V4h3M13 4h3v3M4 13v3h3M13 16h3v-3" /></svg>
        </div>
      </div>
    </div>
  );
}
